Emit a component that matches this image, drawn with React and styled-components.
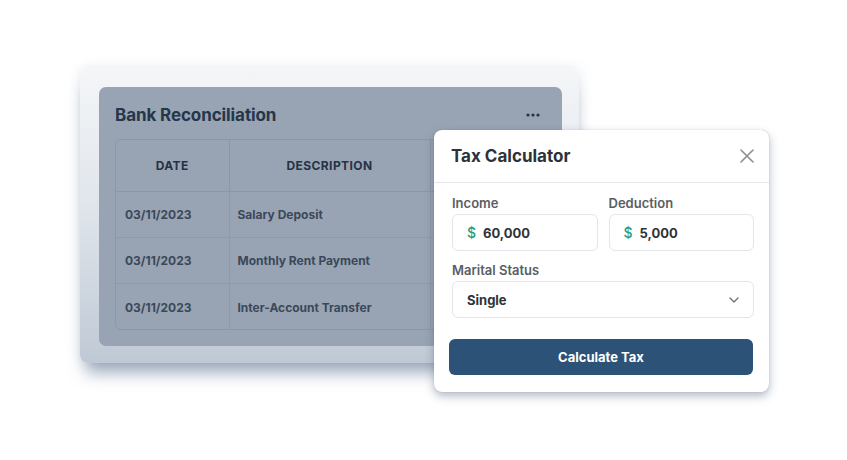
import React from 'react';
import styled, { createGlobalStyle } from 'styled-components';

const GlobalStyle = createGlobalStyle`
  html, body {
    margin: 0;
    padding: 0;
    background: #ffffff;
  }
  body {
    font-family: Inter, "Noto Sans", "Liberation Sans", sans-serif;
  }
  * {
    box-sizing: border-box;
  }
`;

const rows = [
  { date: '03/11/2023', desc: 'Salary Deposit' },
  { date: '03/11/2023', desc: 'Monthly Rent Payment' },
  { date: '03/11/2023', desc: 'Inter-Account Transfer' },
];

const DotsIcon = () => (
  <svg width="14" height="4" viewBox="0 0 14 4">
    <circle cx="2" cy="2" r="1.6" fill="#22344a" />
    <circle cx="7" cy="2" r="1.6" fill="#22344a" />
    <circle cx="12" cy="2" r="1.6" fill="#22344a" />
  </svg>
);

const CloseIcon = () => (
  <svg width="14" height="14" viewBox="0 0 14 14">
    <path d="M1 1L13 13M13 1L1 13" stroke="#8a8d91" strokeWidth="1.6" strokeLinecap="round" />
  </svg>
);

const ChevronIcon = () => (
  <svg width="10" height="6" viewBox="0 0 10 6">
    <path d="M1 1L5 5L9 1" fill="none" stroke="#6b6f75" strokeWidth="1.3" strokeLinecap="round" strokeLinejoin="round" />
  </svg>
);

const App = () => {
  return (
    <Page>
      <GlobalStyle />
      <Stage>
        <Frame>
          <Card>
            <CardHeader>
              <CardTitle>Bank Reconciliation</CardTitle>
              <DotsIcon />
            </CardHeader>
            <TableWrap>
              <Table>
                <thead>
                  <tr>
                    <Th width="113px">Date</Th>
                    <Th width="201px">Description</Th>
                    <Th />
                  </tr>
                </thead>
                <tbody>
                  {rows.map((r, i) => (
                    <tr key={i}>
                      <Td>{r.date}</Td>
                      <Td>{r.desc}</Td>
                      <Td />
                    </tr>
                  ))}
                </tbody>
              </Table>
            </TableWrap>
          </Card>
        </Frame>

        <Modal>
          <ModalHeader>
            <ModalTitle>Tax Calculator</ModalTitle>
            <CloseButton>
              <CloseIcon />
            </CloseButton>
          </ModalHeader>
          <ModalBody>
            <FieldRow>
              <Field>
                <Label>Income</Label>
                <InputBox>
                  <Dollar>$</Dollar>
                  <Value>60,000</Value>
                </InputBox>
              </Field>
              <Field>
                <Label>Deduction</Label>
                <InputBox>
                  <Dollar>$</Dollar>
                  <Value>5,000</Value>
                </InputBox>
              </Field>
            </FieldRow>
            <Field>
              <Label>Marital Status</Label>
              <SelectBox>
                <Value>Single</Value>
                <ChevronIcon />
              </SelectBox>
            </Field>
            <SubmitButton>Calculate Tax</SubmitButton>
          </ModalBody>
        </Modal>
      </Stage>
    </Page>
  );
};

export default App;

const Page = styled.div`
  width: 847px;
  height: 460px;
  overflow: hidden;
  background: #ffffff;
`;

const Stage = styled.div`
  position: relative;
  width: 847px;
  height: 460px;
  padding: 68px 0 0 80px;
`;

const Frame = styled.div`
  width: 499px;
  height: 295px;
  padding: 19px 17px 17px 19px;
  border-radius: 8px;
  background: linear-gradient(180deg, #f4f6f8 0%, #e1e6ec 45%, #bfc9d5 100%);
  box-shadow: 0 16px 16px -6px rgba(70, 95, 130, 0.5), 0 0 12px rgba(160, 175, 195, 0.3);
`;

const Card = styled.div`
  height: 100%;
  border-radius: 7px;
  background: #98a4b3;
  padding: 16px;
  display: flex;
  flex-direction: column;
  gap: 12px;
  overflow: hidden;
`;

const CardHeader = styled.div`
  display: flex;
  align-items: center;
  justify-content: space-between;
  height: 24px;
  padding-right: 6px;
`;

const CardTitle = styled.h2`
  margin: 0;
  font-size: 17px;
  font-weight: 700;
  color: #26364a;
  letter-spacing: -0.1px;
`;

const TableWrap = styled.div`
  border: 1px solid #8b97a6;
  border-radius: 6px;
  overflow: hidden;
`;

const Table = styled.table`
  width: 100%;
  border-collapse: collapse;
  table-layout: fixed;
`;

const Th = styled.th`
  width: ${p => p.width || 'auto'};
  height: 52px;
  padding: 0;
  text-align: center;
  text-transform: uppercase;
  font-size: 12px;
  font-weight: 700;
  letter-spacing: 0.4px;
  color: #243346;
  border-right: 1px solid #8b97a6;
  border-bottom: 1px solid #8b97a6;
  &:last-child {
    border-right: none;
  }
`;

const Td = styled.td`
  height: 46px;
  padding: 0 0 0 8px;
  font-size: 12px;
  font-weight: 700;
  color: #3b4859;
  white-space: nowrap;
  border-right: 1px solid #8e9aa9;
  border-bottom: 1px solid #8e9aa9;
  &:first-child {
    padding-left: 9px;
  }
  &:last-child {
    border-right: none;
  }
  tr:last-child & {
    border-bottom: none;
  }
`;

const Modal = styled.div`
  position: absolute;
  left: 434px;
  top: 130px;
  width: 335px;
  height: 262px;
  background: #ffffff;
  border-radius: 8px;
  box-shadow: 0 4px 10px rgba(60, 80, 110, 0.4), 0 0 1px rgba(60, 80, 110, 0.4);
  display: flex;
  flex-direction: column;
`;

const ModalHeader = styled.div`
  height: 53px;
  display: flex;
  align-items: center;
  justify-content: space-between;
  padding: 0 15px 0 17px;
  border-bottom: 1px solid #e4e6e9;
`;

const ModalTitle = styled.h3`
  margin: 0;
  font-size: 17px;
  font-weight: 700;
  color: #2e3236;
`;

const CloseButton = styled.button`
  border: none;
  background: none;
  padding: 0;
  display: flex;
  cursor: pointer;
`;

const ModalBody = styled.div`
  padding: 12px 15px 17px 18px;
  display: flex;
  flex-direction: column;
  gap: 11px;
`;

const FieldRow = styled.div`
  display: grid;
  grid-template-columns: 1fr 1fr;
  gap: 11px;
`;

const Field = styled.div`
  display: flex;
  flex-direction: column;
  gap: 3px;
`;

const Label = styled.label`
  font-size: 13px;
  line-height: 16px;
  font-weight: 600;
  color: #5a5e63;
`;

const InputBox = styled.div`
  height: 37px;
  display: flex;
  align-items: center;
  gap: 7px;
  padding: 0 14px;
  border: 1px solid #e2e5e9;
  border-radius: 6px;
  background: #ffffff;
`;

const Dollar = styled.span`
  font-size: 14px;
  font-weight: 500;
  color: #2a9d7c;
`;

const Value = styled.span`
  font-size: 13px;
  font-weight: 700;
  color: #2f3337;
`;

const SelectBox = styled(InputBox)`
  justify-content: space-between;
`;

const SubmitButton = styled.button`
  margin: 10px 1px 0 -3px;
  height: 36px;
  border: none;
  border-radius: 6px;
  background: #2c5277;
  color: #ffffff;
  font-family: inherit;
  font-size: 13px;
  font-weight: 700;
  cursor: pointer;
`;
